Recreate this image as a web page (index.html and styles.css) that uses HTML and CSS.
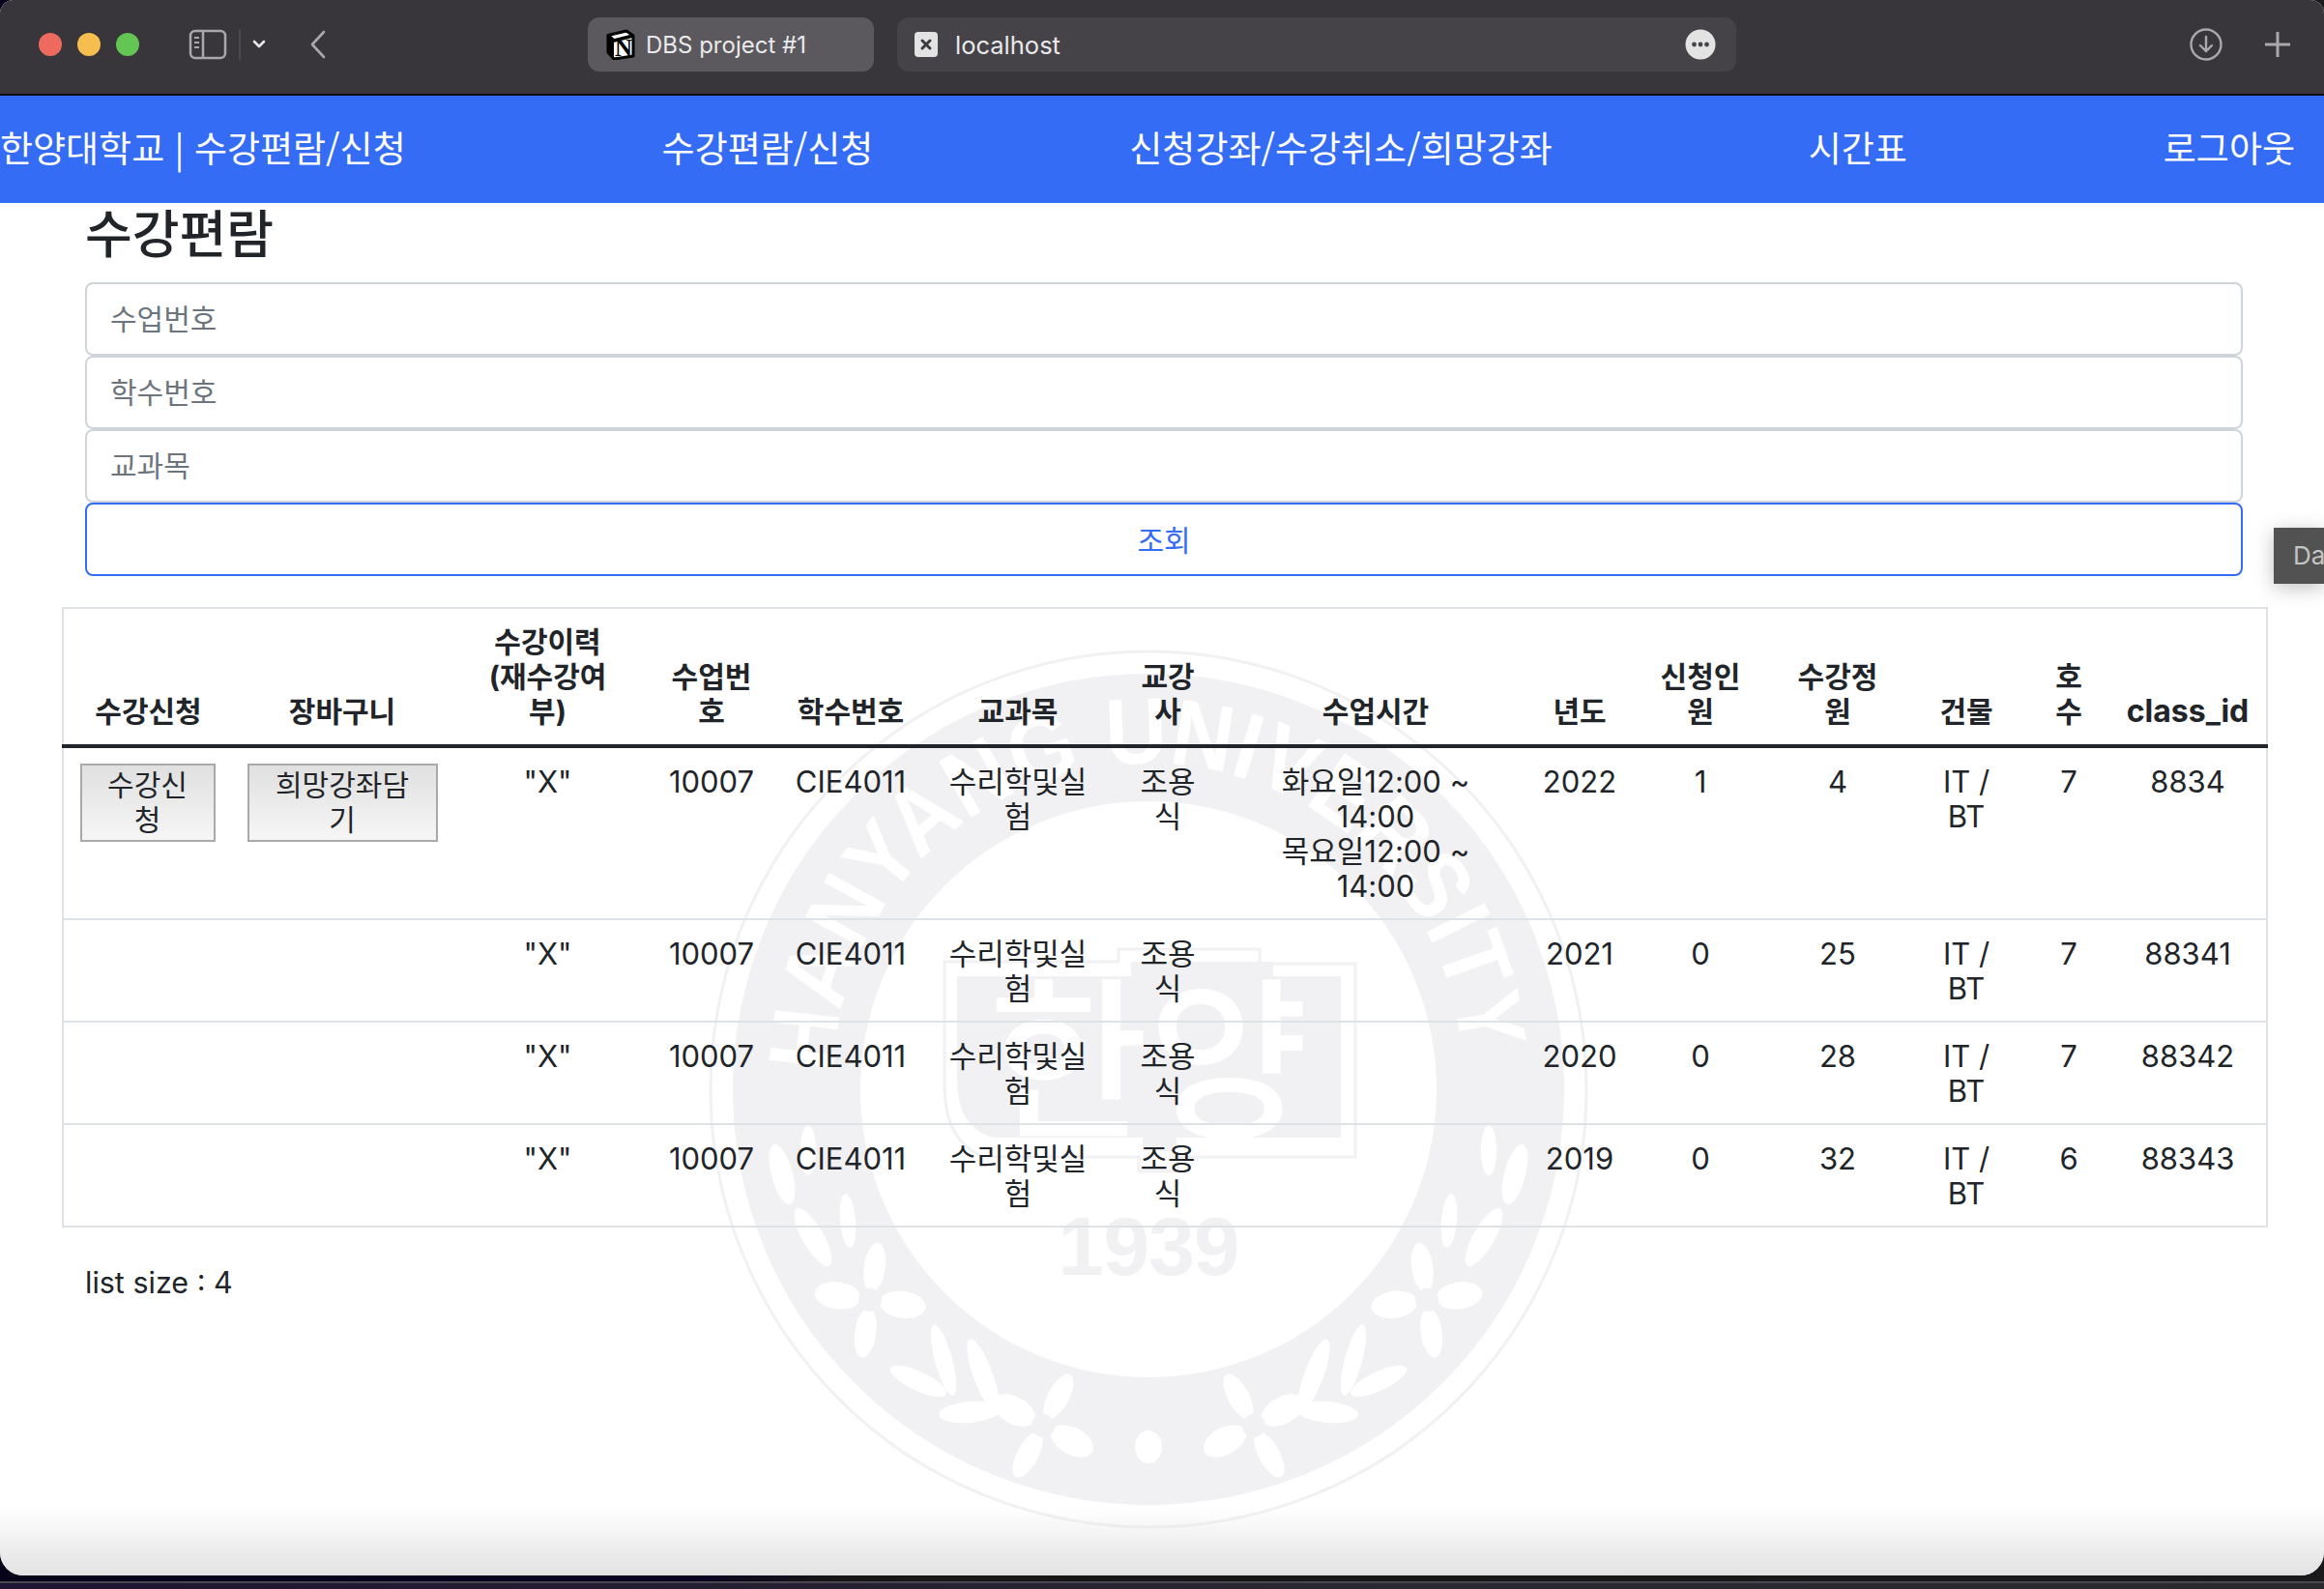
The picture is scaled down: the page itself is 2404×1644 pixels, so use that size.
FILE: index.html
```html
<!DOCTYPE html>
<html lang="ko">
<head>
<meta charset="utf-8">
<title>한양대학교 수강편람/신청</title>
<link rel="stylesheet" href="styles.css">
</head>
<body>
<div class="window">
  <header class="toolbar">
    <div class="lights">
      <span class="light red"></span><span class="light yellow"></span><span class="light green"></span>
    </div>
    <svg class="ico-sidebar" width="40" height="32" viewBox="0 0 40 32" fill="none" stroke="#a9a8aa" stroke-width="2.5">
      <rect x="2" y="2" width="36" height="28" rx="5"/>
      <path d="M15 2v28"/>
      <path d="M6 9h5M6 14h5M6 19h5" stroke-width="2"/>
    </svg>
    <span class="toolbar-divider"></span>
    <svg class="ico-chevron" width="14" height="10" viewBox="0 0 14 10" fill="none" stroke="#e6e6e6" stroke-width="2.6" stroke-linecap="round" stroke-linejoin="round"><path d="M2 2l5 5 5-5"/></svg>
    <svg class="ico-back" width="18" height="30" viewBox="0 0 18 30" fill="none" stroke="#a9a8aa" stroke-width="2.6" stroke-linecap="round" stroke-linejoin="round"><path d="M15 2L3 15l12 13"/></svg>
    <div class="tab tab-active">
      <svg class="ico-notion" width="30" height="32" viewBox="0 0 30 32">
        <path d="M2 6.500L21 2l7 5v21l-20 3-6-7z" fill="#fff" stroke="#000" stroke-width="3" stroke-linejoin="round"/>
        <path d="M2 6.500l6 5.500 20-5" fill="none" stroke="#000" stroke-width="3.500"/>
        <path d="M2 7v17l6 7V12z" fill="#000"/>
        <text class="notion-n" x="18" y="27.500" text-anchor="middle">N</text>
      </svg>
      <span class="tab-title">DBS project #1</span>
    </div>
    <div class="tab tab-idle">
      <svg class="ico-close" width="24" height="26" viewBox="0 0 24 26"><rect width="24" height="26" rx="4" fill="#e3e3e3"/><path d="M8 9l8 8M16 9l-8 8" stroke="#3c3a3f" stroke-width="3" stroke-linecap="round"/></svg>
      <span class="tab-title tab-title-idle">localhost</span>
      <svg class="ico-more" width="32" height="32" viewBox="0 0 32 32"><circle cx="16" cy="16" r="15.5" fill="#e3e3e3"/><circle cx="9.5" cy="16" r="2.4" fill="#47454a"/><circle cx="16" cy="16" r="2.4" fill="#47454a"/><circle cx="22.500" cy="16" r="2.4" fill="#47454a"/></svg>
    </div>
    <svg class="ico-download" width="34" height="34" viewBox="0 0 34 34" fill="none" stroke="#a9a8aa" stroke-width="2.4" stroke-linecap="round" stroke-linejoin="round"><circle cx="17" cy="17" r="15.500"/><path d="M17 9v15M11 18l6 6 6-6"/></svg>
    <svg class="ico-plus" width="28" height="28" viewBox="0 0 28 28" fill="none" stroke="#a9a8aa" stroke-width="3"><path d="M14 1v26M1 14h26"/></svg>
  </header>

  <nav class="navbar">
    <a class="nav-link">한양대학교 | 수강편람/신청</a>
    <a class="nav-link">수강편람/신청</a>
    <a class="nav-link">신청강좌/수강취소/희망강좌</a>
    <a class="nav-link">시간표</a>
    <a class="nav-link">로그아웃</a>
  </nav>

  <main class="page">
    <svg class="seal" width="920" height="920" viewBox="-460 -460 920 920">
      <defs>
        <path id="band-arc" d="M-325 -12A325 325 0 1 1 325 -12"/>
        <g id="flower">
          <ellipse cx="0" cy="-34" rx="11" ry="26" fill="#fff"/>
          <ellipse cx="0" cy="34" rx="11" ry="26" fill="#fff"/>
          <ellipse cx="-34" cy="0" rx="24" ry="14" fill="#fff"/>
          <ellipse cx="34" cy="0" rx="24" ry="14" fill="#fff"/>
          <circle r="12" fill="#f1f1f3"/>
        </g>
        <g id="wreath">
          <ellipse cx="-352" cy="63" rx="8" ry="26" fill="#fff"/>
          <ellipse cx="-379" cy="88" rx="11" ry="32" transform="rotate(-15 -379 88)" fill="#fff"/>
          <ellipse cx="-311" cy="136" rx="8" ry="28" transform="rotate(-5 -311 136)" fill="#fff"/>
          <ellipse cx="-347" cy="153" rx="11" ry="34" transform="rotate(-30 -347 153)" fill="#fff"/>
          <use href="#flower" transform="translate(-288 218) rotate(8)"/>
          <ellipse cx="-212" cy="280" rx="9" ry="38" transform="rotate(-15 -212 280)" fill="#fff"/>
          <ellipse cx="-238" cy="302" rx="10" ry="32" transform="rotate(-65 -238 302)" fill="#fff"/>
          <ellipse cx="-171" cy="296" rx="10" ry="40" transform="rotate(-20 -171 296)" fill="#fff"/>
          <ellipse cx="-185" cy="334" rx="11" ry="32" transform="rotate(85 -185 334)" fill="#fff"/>
          <use href="#flower" transform="translate(-109 348) rotate(28)"/>
        </g>
      </defs>
      <circle r="453" fill="none" stroke="#f1f1f3" stroke-width="3"/>
      <circle r="364" fill="none" stroke="#f1f1f3" stroke-width="132"/>
      <text class="seal-band"><textPath href="#band-arc" startOffset="5" textLength="990" lengthAdjust="spacingAndGlyphs">HANYANG UNIVERSITY</textPath></text>
      <use href="#wreath"/>
      <use href="#wreath" transform="scale(-1 1)"/>
      <ellipse cx="0" cy="370" rx="14" ry="17" fill="#fff"/>
      <path d="M-211 -132H-31V-145H115V-130H214V70H30V85H-10V70H-170Q-211 55 -211 -5Z" fill="none" stroke="#f1f1f3" stroke-width="3"/>
      <path d="M-198 -117H-18V-132H129V-117H199V50H29V64H-6V50H-160Q-198 40 -198 -10Z" fill="#f1f1f3"/>
      <text class="seal-name" x="0" y="36" text-anchor="middle">한양</text>
      <text class="seal-year" x="0" y="192" text-anchor="middle">1939</text>
    </svg>

    <section class="search">
      <h2 class="title">수강편람</h2>
      <input class="field" type="text" placeholder="수업번호">
      <input class="field" type="text" placeholder="학수번호">
      <input class="field" type="text" placeholder="교과목">
      <button class="search-btn" type="button">조회</button>
    </section>

    <table class="courses">
      <colgroup>
        <col class="c1"><col class="c2"><col class="c3"><col class="c4"><col class="c5"><col class="c6"><col class="c7"><col class="c8"><col class="c9"><col class="c10"><col class="c11"><col class="c12"><col class="c13"><col class="c14">
      </colgroup>
      <thead>
        <tr>
          <th>수강신청</th><th>장바구니</th><th>수강이력<br>(재수강여<br>부)</th><th>수업번<br>호</th><th>학수번호</th><th>교과목</th><th>교강<br>사</th><th>수업시간</th><th>년도</th><th>신청인<br>원</th><th>수강정<br>원</th><th>건물</th><th>호<br>수</th><th class="latin-head">class_id</th>
        </tr>
      </thead>
      <tbody>
        <tr>
          <td><button class="row-btn" type="button">수강신<br>청</button></td>
          <td><button class="row-btn" type="button">희망강좌담<br>기</button></td>
          <td>"X"</td><td>10007</td><td>CIE4011</td><td>수리학및실<br>험</td><td>조용<br>식</td>
          <td>화요일12:00 ~<br>14:00<br>목요일12:00 ~<br>14:00</td>
          <td>2022</td><td>1</td><td>4</td><td>IT /<br>BT</td><td>7</td><td>8834</td>
        </tr>
        <tr>
          <td></td><td></td><td>"X"</td><td>10007</td><td>CIE4011</td><td>수리학및실<br>험</td><td>조용<br>식</td><td></td>
          <td>2021</td><td>0</td><td>25</td><td>IT /<br>BT</td><td>7</td><td>88341</td>
        </tr>
        <tr>
          <td></td><td></td><td>"X"</td><td>10007</td><td>CIE4011</td><td>수리학및실<br>험</td><td>조용<br>식</td><td></td>
          <td>2020</td><td>0</td><td>28</td><td>IT /<br>BT</td><td>7</td><td>88342</td>
        </tr>
        <tr>
          <td></td><td></td><td>"X"</td><td>10007</td><td>CIE4011</td><td>수리학및실<br>험</td><td>조용<br>식</td><td></td>
          <td>2019</td><td>0</td><td>32</td><td>IT /<br>BT</td><td>6</td><td>88343</td>
        </tr>
      </tbody>
    </table>

    <p class="list-size">list size : 4</p>

    <div class="side-tab">Da</div>
    <div class="bottom-fade"></div>
  </main>
</div>
<div class="desktop-strip"></div>
</body>
</html>
```

FILE: styles.css
```css
* { box-sizing: border-box; }

html, body {
  margin: 0;
  height: 100%;
  overflow: hidden;
}

body {
  background: linear-gradient(90deg, #06021a 0, #0a0420 30%, #161616 36%, #1a1a1c 100%);
  font-family: Inter, "Noto Sans CJK KR", sans-serif;
  color: #212529;
}

.window {
  height: 1630px;
  display: flex;
  flex-direction: column;
  background: #fff;
  border-radius: 14px 14px 24px 24px;
  overflow: hidden;
}

.desktop-strip {
  height: 14px;
  margin-top: 6px;
  border-top: 2px solid #4a4652;
  background: linear-gradient(90deg, #1e1433, #2a2830 60%, #2a2a2e);
}

/* Browser toolbar */
.toolbar {
  flex: none;
  height: 99px;
  padding-bottom: 6px;
  display: flex;
  align-items: center;
  background: #38363b;
  border-bottom: 2px solid #0c0c10;
}

.lights {
  display: flex;
  gap: 16px;
  margin-left: 40px;
}

.light {
  width: 24px;
  height: 24px;
  border-radius: 50%;
}
.red { background: #ee6a5f; }
.yellow { background: #f5be4f; }
.green { background: #62c554; }

.ico-sidebar { margin-left: 51px; }

.toolbar-divider {
  width: 2px;
  height: 32px;
  margin-left: 12px;
  background: #4c4a50;
}

.ico-chevron { margin-left: 12px; }
.ico-back { margin-left: 45px; }

.tab {
  height: 56px;
  display: flex;
  align-items: center;
  border-radius: 12px;
}

.tab-active {
  width: 296px;
  margin-left: 270px;
  padding-left: 19px;
  background: #5b595e;
}

.tab-idle {
  width: 868px;
  margin-left: 24px;
  padding-left: 18px;
  background: #454348;
}

.ico-notion { flex: none; }

.notion-n {
  font-family: "Liberation Serif", serif;
  font-weight: 700;
  font-size: 25px;
  fill: #000;
}

.tab-title {
  margin-left: 11px;
  padding-top: 2px;
  font-size: 24px;
  color: #e9e9ea;
}

.tab-title-idle {
  margin-left: 18px;
  font-size: 25.500px;
}

.ico-more { margin-left: auto; margin-right: 21px; }
.ico-download { margin-left: 469px; }
.ico-plus { margin-left: 43px; }

/* Site navbar */
.navbar {
  flex: none;
  height: 111px;
  padding: 0 30px 6px 0;
  display: flex;
  align-items: center;
  justify-content: space-between;
  background: #346cf5;
}

.nav-link {
  font-family: "Noto Sans CJK KR", sans-serif;
  font-size: 37px;
  line-height: 54px;
  color: #fff;
  white-space: nowrap;
}

/* Page body */
.page {
  position: relative;
  flex: 1;
  overflow: hidden;
}

.seal {
  position: absolute;
  left: 728px;
  top: 457px;
  pointer-events: none;
}

.seal-band {
  font-family: "Liberation Sans", sans-serif;
  font-weight: 700;
  font-size: 97px;
  fill: #fff;
}

.seal-name {
  font-family: "Noto Sans CJK KR", sans-serif;
  font-weight: 500;
  font-size: 180px;
  fill: #fff;
}

.seal-year {
  font-family: "Liberation Sans", sans-serif;
  font-weight: 700;
  font-size: 86px;
  letter-spacing: -1px;
  fill: #f1f1f3;
}

.search {
  position: relative;
  margin: 0 84px 0 88px;
  display: flex;
  flex-direction: column;
}

.title {
  margin: 0;
  height: 82px;
  font-size: 53px;
  line-height: 66px;
  font-weight: 500;
}

.field {
  height: 76px;
  padding: 0 24px;
  font: 400 30px Inter, "Noto Sans CJK KR", sans-serif;
  color: #212529;
  background: #fff;
  border: 2px solid #ced4da;
  border-radius: 8px;
}
.field::placeholder { color: #6c757d; opacity: 1; }

.search-btn {
  height: 76px;
  padding-bottom: 4px;
  font: 400 30px Inter, "Noto Sans CJK KR", sans-serif;
  color: #346cf5;
  background: transparent;
  border: 2px solid #346cf5;
  border-radius: 8px;
}

.courses {
  position: relative;
  width: 2280px;
  margin: 32px 0 0 64px;
  table-layout: fixed;
  border-collapse: collapse;
  border: 2px solid #dee2e6;
  font-size: 31px;
  line-height: 36px;
  text-align: center;
  white-space: nowrap;
}

.c1 { width: 176px; }
.c2 { width: 226px; }
.c3 { width: 199px; }
.c4 { width: 140px; }
.c5 { width: 148px; }
.c6 { width: 198px; }
.c7 { width: 112px; }
.c8 { width: 318px; }
.c9 { width: 104px; }
.c10 { width: 146px; }
.c11 { width: 138px; }
.c12 { width: 128px; }
.c13 { width: 84px; }
.c14 { width: 163px; }

.courses th {
  padding: 16px 0;
  vertical-align: bottom;
  font-size: 30px;
  font-weight: 700;
  border-bottom: 4px solid #212529;
}

.courses th.latin-head { font-size: 32px; }

.courses td {
  padding: 17px 0 15px;
  vertical-align: top;
}

.courses tbody tr + tr td { border-top: 2px solid #dee2e6; }

.row-btn {
  display: inline-block;
  margin-top: -1px;
  padding: 2px 8px 3px;
  font: 400 30px/36px Inter, "Noto Sans CJK KR", sans-serif;
  color: #212529;
  background: linear-gradient(180deg, #e0e0e0, #f6f6f6);
  border: 2px solid #a9a9a9;
  white-space: nowrap;
}
.courses td:nth-child(1) .row-btn { width: 140px; margin-right: 2px; }
.courses td:nth-child(2) .row-btn { width: 197px; }

.list-size {
  position: relative;
  margin: 39px 0 0 88px;
  font-size: 30.500px;
  line-height: 36px;
}

.side-tab {
  position: absolute;
  right: 0;
  top: 336px;
  width: 52px;
  height: 58px;
  padding-left: 20px;
  overflow: hidden;
  font: 400 26px/58px Inter, sans-serif;
  color: #c4c4c4;
  background: #525252;
  box-shadow: 0 4px 20px rgba(0, 0, 0, .25);
}

.bottom-fade {
  position: absolute;
  left: 0;
  right: 0;
  bottom: 0;
  height: 70px;
  background: linear-gradient(180deg, rgba(226, 226, 226, 0), #e2e2e2);
  pointer-events: none;
}
```
